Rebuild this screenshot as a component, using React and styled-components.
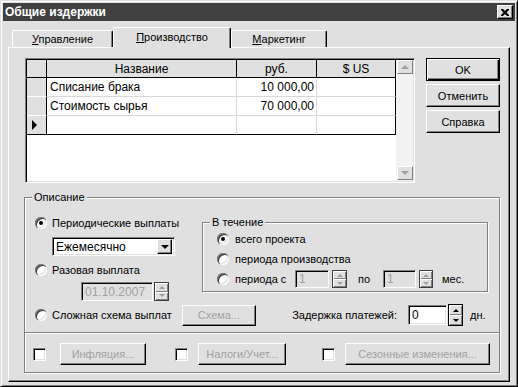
import React from 'react'
import styled, { createGlobalStyle, css } from 'styled-components'

const bg = '#e0e0e0'
const dark = '#808080'
const light = '#ffffff'
const black = '#000000'
const greyText = '#a0a0a0'

const GlobalStyle = createGlobalStyle`
  html, body { margin: 0; padding: 0; background: ${bg}; }
  body { font-family: "Liberation Sans", Arial, sans-serif; font-size: 11px; color: #000; }
  * { box-sizing: border-box; }
`

const raised = css`
  border: 1px solid;
  border-color: ${light} ${black} ${black} ${light};
  box-shadow: inset -1px -1px 0 ${dark};
`

const sunken = css`
  border: 1px solid;
  border-color: ${dark} ${light} ${light} ${dark};
  box-shadow: inset 1px 1px 0 ${black}, inset -1px -1px 0 ${bg};
`

const Window = styled.div`
  width: 518px;
  height: 387px;
  background: ${bg};
  border: 1px solid;
  border-color: ${bg} ${black} ${black} ${bg};
  box-shadow: inset 1px 1px 0 ${light}, inset -1px -1px 0 ${dark};
  padding: 2px;
  display: flex;
  flex-direction: column;
`

const TitleBar = styled.div`
  height: 18px;
  background: #404040;
  display: flex;
  align-items: center;
  justify-content: space-between;
  padding: 0 2px 0 2px;
`

const TitleText = styled.span`
  color: #fff;
  font-weight: bold;
  font-size: 12px;
`

const CloseButton = styled.div`
  width: 16px;
  height: 14px;
  background: ${bg};
  ${raised};
  display: flex;
  align-items: center;
  justify-content: center;
`

const Content = styled.div`
  flex: 1;
  display: flex;
  flex-direction: column;
  padding: 6px 5px 2px 5px;
`

const TabRow = styled.div`
  display: flex;
  align-items: flex-end;
  height: 20px;
  padding-left: 4px;
  position: relative;
  z-index: 1;
`

const Tab = styled.div`
  width: ${p => p.$w}px;
  height: ${p => (p.$active ? 21 : 17)}px;
  margin-bottom: ${p => (p.$active ? -1 : 0)}px;
  background: ${bg};
  border-top: 1px solid ${light};
  border-left: 1px solid ${light};
  border-right: 1px solid ${black};
  box-shadow: inset -1px 0 0 ${dark};
  border-radius: 2px 2px 0 0;
  display: flex;
  align-items: center;
  justify-content: center;
  padding-bottom: ${p => (p.$active ? 2 : 0)}px;
  font-size: 11px;
`

const Panel = styled.div`
  flex: 1;
  border: 1px solid;
  border-color: ${light} ${black} ${black} ${light};
  box-shadow: inset -1px -1px 0 ${dark};
  padding: 10px 9px 0 16px;
`

const TopSection = styled.div`
  display: flex;
  gap: 11px;
`

const GridBox = styled.div`
  width: 390px;
  height: 125px;
  ${sunken};
  padding: 1px;
  display: flex;
  background: #fff;
`

const Table = styled.div`
  flex: 1;
  background: #fff;
`

const Rows = styled.div`
  display: grid;
  grid-template-columns: 20px 190px 80px 79px;
  grid-template-rows: 18px repeat(3, 19px);
  width: 369px;
`

const HeadCell = styled.div`
  background: ${bg};
  border-right: 1px solid ${black};
  border-bottom: 1px solid ${black};
  display: flex;
  align-items: center;
  justify-content: center;
  font-size: 12px;
`

const IndCell = styled.div`
  background: ${bg};
  border-right: 1px solid ${black};
  border-bottom: 1px solid ${p => (p.$last ? black : light)};
  display: flex;
  align-items: center;
  justify-content: center;
`

const Pointer = styled.span`
  width: 0;
  height: 0;
  border-left: 5px solid ${black};
  border-top: 5px solid transparent;
  border-bottom: 5px solid transparent;
  margin-left: -4px;
`

const Cell = styled.div`
  border-right: 1px solid ${p => (p.$lastCol ? black : '#d8d8d8')};
  border-bottom: 1px solid ${p => (p.$last ? black : '#d8d8d8')};
  display: flex;
  align-items: center;
  justify-content: ${p => (p.$right ? 'flex-end' : 'flex-start')};
  padding: 0 2px 0 3px;
  font-size: 12px;
  white-space: nowrap;
`

const ScrollBar = styled.div`
  width: 17px;
  background: #f2f2f2;
  display: flex;
  flex-direction: column;
  justify-content: space-between;
  padding: 0 0 1px 1px;
`

const ScrollBtn = styled.div`
  height: 14px;
  background: ${bg};
  border: 1px solid;
  border-color: ${light} ${dark} ${dark} ${light};
  display: flex;
  align-items: center;
  justify-content: center;
  &::before {
    content: '';
    border-left: 4px solid transparent;
    border-right: 4px solid transparent;
    ${p => (p.$down ? `border-top: 4px solid ${greyText};` : `border-bottom: 4px solid ${greyText};`)}
  }
`

const ButtonColumn = styled.div`
  display: flex;
  flex-direction: column;
  gap: 3px;
`

const Button = styled.button`
  width: ${p => p.$w}px;
  height: ${p => p.$h || 23}px;
  flex: none;
  margin: 0;
  margin-left: ${p => p.$ml || 0}px;
  padding: 0;
  font-family: inherit;
  font-size: 11px;
  color: ${p => (p.disabled ? greyText : black)};
  background: ${bg};
  ${raised};
  ${p =>
    p.$default &&
    css`
      border: 1px solid ${black};
      box-shadow: inset 1px 1px 0 ${light}, inset -1px -1px 0 ${black}, inset -2px -2px 0 ${dark};
    `}
`

const Group = styled.fieldset`
  margin: 7px 0 0 -1px;
  padding: 0 11px 7px 10px;
  border: 1px solid ${dark};
  box-shadow: 1px 1px 0 ${light}, inset 1px 1px 0 ${light};
  min-width: 0;
`

const Legend = styled.legend`
  padding: 0 2px;
  margin-left: ${p => p.$ml}px;
  font-size: 11px;
  line-height: 14px;
  background: ${bg};
`

const Upper = styled.div`
  display: flex;
  align-items: flex-start;
  margin-top: 11px;
`

const LeftCol = styled.div`
  width: 167px;
  display: flex;
  flex-direction: column;
`

const RadioRow = styled.div`
  display: flex;
  align-items: center;
  height: 16px;
  margin-top: ${p => p.$mt || 0}px;
  gap: ${p => p.$gap || 5}px;
  font-size: 11px;
  flex: none;
  white-space: nowrap;
  width: ${p => (p.$w ? `${p.$w}px` : 'auto')};
`

const RadioDot = styled.span`
  width: 12px;
  height: 12px;
  flex: none;
  border-radius: 50%;
  background: #fff;
  position: relative;
  box-shadow: inset 1px 1px 0 ${dark}, inset 2px 2px 0 #404040, inset -1px -1px 0 ${light}, inset -2px -2px 0 ${bg};
  &::after {
    content: '';
    display: ${p => (p.$checked ? 'block' : 'none')};
    position: absolute;
    left: 4px;
    top: 4px;
    width: 4px;
    height: 4px;
    border-radius: 50%;
    background: ${black};
  }
`

const Select = styled.div`
  width: 123px;
  height: 19px;
  margin: 6px 0 0 17px;
  ${sunken};
  background: #fff;
  display: flex;
  align-items: center;
  justify-content: space-between;
  padding: 0 2px 0 3px;
  font-size: 12px;
`

const DropBtn = styled.span`
  width: 15px;
  height: 15px;
  background: ${bg};
  ${raised};
  display: flex;
  align-items: center;
  justify-content: center;
  &::before {
    content: '';
    border-left: 4px solid transparent;
    border-right: 4px solid transparent;
    border-top: 4px solid ${black};
  }
`

const FieldRow = styled.div`
  display: flex;
  align-items: center;
  gap: 1px;
  margin: ${p => p.$mt || 0}px 0 0 ${p => p.$ml || 0}px;
`

const Field = styled.div`
  width: ${p => p.$w}px;
  height: ${p => p.$h}px;
  flex: none;
  margin-left: ${p => p.$ml || 0}px;
  ${sunken};
  background: ${p => (p.$disabled ? bg : '#fff')};
  color: ${p => (p.$disabled ? greyText : black)};
  padding: 0 3px;
  display: flex;
  align-items: center;
  font-size: 12px;
`

const SpinBox = styled.div`
  width: ${p => p.$w || 15}px;
  height: ${p => p.$h}px;
  flex: none;
  margin-left: ${p => p.$ml || 0}px;
  border: 1px solid ${p => (p.$disabled ? '#404040' : black)};
  display: flex;
  flex-direction: column;
`

const SpinHalf = styled.div`
  flex: 1;
  background: ${bg};
  box-shadow: inset 1px 1px 0 ${light}, inset -1px -1px 0 ${dark};
  display: flex;
  align-items: center;
  justify-content: center;
  &::before {
    content: '';
    border-left: 3px solid transparent;
    border-right: 3px solid transparent;
    ${p => (p.$down ? `border-top: 3px solid ${p.$c};` : `border-bottom: 3px solid ${p.$c};`)}
  }
`

const During = styled.fieldset`
  width: 286px;
  margin: 0;
  padding: 0 6px 3px 14px;
  border: 1px solid ${dark};
  box-shadow: 1px 1px 0 ${light}, inset 1px 1px 0 ${light};
  min-width: 0;
  display: flex;
  flex-direction: column;
  gap: 2px;
`

const DuringRow = styled.div`
  display: flex;
  align-items: center;
  height: 18px;
  margin-top: ${p => p.$mt || 0}px;
  font-size: 11px;
`

const Text = styled.span`
  font-size: 11px;
  margin-left: ${p => p.$ml || 0}px;
  width: ${p => (p.$w ? `${p.$w}px` : 'auto')};
  flex: none;
  white-space: nowrap;
`

const BottomLine = styled.div`
  display: flex;
  align-items: center;
  height: 22px;
  margin-top: 3px;
`

const Spacer = styled.div`
  flex: 1;
`

const Divider = styled.div`
  height: 2px;
  margin: 6px -11px 0 -10px;
  border-top: 1px solid ${dark};
  border-bottom: 1px solid ${light};
`

const BottomRow = styled.div`
  display: flex;
  align-items: center;
  height: 22px;
  margin-top: 9px;
`

const Check = styled.span`
  width: 13px;
  height: 13px;
  flex: none;
  margin-left: ${p => p.$ml || 0}px;
  background: #fff;
  ${sunken};
`

const Spinner = ({ h, w, ml, disabled }) => (
  <SpinBox $h={h} $w={w} $ml={ml} $disabled={disabled}>
    <SpinHalf $c={disabled ? greyText : black} />
    <SpinHalf $down $c={disabled ? greyText : black} />
  </SpinBox>
)

const rows = [
  { name: 'Списание брака', rub: '10 000,00', usd: '' },
  { name: 'Стоимость сырья', rub: '70 000,00', usd: '' },
  { name: '', rub: '', usd: '', current: true },
]

export default function App() {
  return (
    <>
      <GlobalStyle />
      <Window>
        <TitleBar>
          <TitleText>Общие издержки</TitleText>
          <CloseButton>
            <svg width="8" height="7" viewBox="0 0 8 7">
              <path d="M0 0h2l2 2 2-2h2v1L5.5 3.5 8 6v1H6L4 5 2 7H0V6l2.5-2.5L0 1z" fill="#000" />
            </svg>
          </CloseButton>
        </TitleBar>
        <Content>
          <TabRow>
            <Tab $w={101}><span><u>У</u>правление</span></Tab>
            <Tab $w={118} $active><span><u>П</u>роизводство</span></Tab>
            <Tab $w={96}><span><u>М</u>аркетинг</span></Tab>
          </TabRow>
          <Panel>
            <TopSection>
              <GridBox>
                <Table>
                  <Rows>
                    <HeadCell />
                    <HeadCell>Название</HeadCell>
                    <HeadCell>руб.</HeadCell>
                    <HeadCell>$ US</HeadCell>
                    {rows.map((r, i) => {
                      const last = i === rows.length - 1
                      return (
                        <React.Fragment key={i}>
                          <IndCell $last={last}>{r.current && <Pointer />}</IndCell>
                          <Cell $last={last}>{r.name}</Cell>
                          <Cell $last={last} $right>{r.rub}</Cell>
                          <Cell $last={last} $lastCol $right>{r.usd}</Cell>
                        </React.Fragment>
                      )
                    })}
                  </Rows>
                </Table>
                <ScrollBar>
                  <ScrollBtn />
                  <ScrollBtn $down />
                </ScrollBar>
              </GridBox>
              <ButtonColumn>
                <Button $w={74} $default>OK</Button>
                <Button $w={74}>Отменить</Button>
                <Button $w={74}>Справка</Button>
              </ButtonColumn>
            </TopSection>

            <Group>
              <Legend $ml={-3}>Описание</Legend>
              <Upper>
                <LeftCol>
                  <RadioRow>
                    <RadioDot $checked />
                    Периодические выплаты
                  </RadioRow>
                  <Select>
                    Ежемесячно
                    <DropBtn />
                  </Select>
                  <RadioRow $mt={6}>
                    <RadioDot />
                    Разовая выплата
                  </RadioRow>
                  <FieldRow $mt={4} $ml={46}>
                    <Field $w={72} $h={19} $disabled>01.10.2007</Field>
                    <Spinner h={19} disabled />
                  </FieldRow>
                </LeftCol>
                <During>
                  <Legend $ml={-7}>В течение</Legend>
                  <DuringRow $mt={1}>
                    <RadioRow $gap={6}>
                      <RadioDot $checked />
                      всего проекта
                    </RadioRow>
                  </DuringRow>
                  <DuringRow>
                    <RadioRow $gap={6}>
                      <RadioDot />
                      периода производства
                    </RadioRow>
                  </DuringRow>
                  <DuringRow>
                    <RadioRow $gap={6} $w={78}>
                      <RadioDot />
                      периода с
                    </RadioRow>
                    <Field $w={34} $h={18} $disabled>1</Field>
                    <Spinner h={18} ml={3} disabled />
                    <Text $ml={11} $w={25}>по</Text>
                    <Field $w={33} $h={18} $disabled>1</Field>
                    <Spinner h={18} w={14} ml={3} disabled />
                    <Text $ml={9}>мес.</Text>
                  </DuringRow>
                </During>
              </Upper>
              <BottomLine>
                <RadioRow $w={147}>
                  <RadioDot />
                  Сложная схема выплат
                </RadioRow>
                <Button $w={74} $h={21} disabled>Схема...</Button>
                <Spacer />
                <Text>Задержка платежей:</Text>
                <Field $w={39} $h={20} $ml={11}>0</Field>
                <Spinner h={22} ml={1} />
                <Text $ml={7} $w={18}>дн.</Text>
              </BottomLine>
              <Divider />
              <BottomRow>
                <Check $ml={-2} />
                <Button $w={86} $h={22} $ml={14} disabled>Инфляция...</Button>
                <Check $ml={29} />
                <Button $w={88} $h={22} $ml={10} disabled>Налоги/Учет...</Button>
                <Check $ml={36} />
                <Button $w={145} $h={22} $ml={10} disabled>Сезонные изменения...</Button>
              </BottomRow>
            </Group>
          </Panel>
        </Content>
      </Window>
    </>
  )
}
